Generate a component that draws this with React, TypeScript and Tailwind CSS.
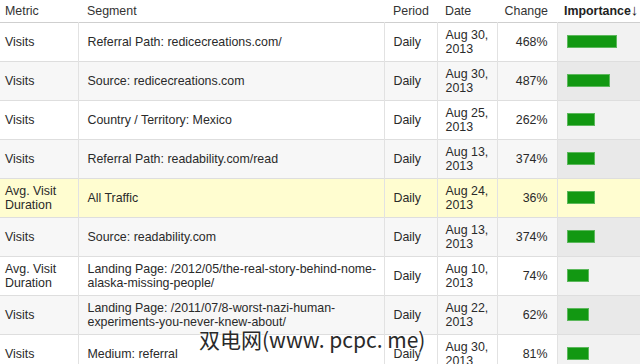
const rows = [
  { metric: ['Visits'], segment: ['Referral Path: redicecreations.com/'], date: 'Aug 30,', change: '468%', bar: 50 },
  { metric: ['Visits'], segment: ['Source: redicecreations.com'], date: 'Aug 30,', change: '487%', bar: 43 },
  { metric: ['Visits'], segment: ['Country / Territory: Mexico'], date: 'Aug 25,', change: '262%', bar: 28 },
  { metric: ['Visits'], segment: ['Referral Path: readability.com/read'], date: 'Aug 13,', change: '374%', bar: 28 },
  { metric: ['Avg. Visit', 'Duration'], segment: ['All Traffic'], date: 'Aug 24,', change: '36%', bar: 28, highlight: true },
  { metric: ['Visits'], segment: ['Source: readability.com'], date: 'Aug 13,', change: '374%', bar: 28 },
  {
    metric: ['Avg. Visit', 'Duration'],
    segment: ['Landing Page: /2012/05/the-real-story-behind-nome-', 'alaska-missing-people/'],
    date: 'Aug 10,', change: '74%', bar: 22,
  },
  {
    metric: ['Visits'],
    segment: ['Landing Page: /2011/07/8-worst-nazi-human-', 'experiments-you-never-knew-about/'],
    date: 'Aug 22,', change: '62%', bar: 22,
  },
  { metric: ['Visits'], segment: ['Medium: referral'], date: 'Aug 30,', change: '81%', bar: 22 },
]

function Lines({ lines }: { lines: string[] }) {
  return (
    <>
      {lines.map((l, i) => (
        <div key={i}>{l}</div>
      ))}
    </>
  )
}

export default function App() {
  return (
    <div className="relative w-[640px] h-[364px] overflow-hidden bg-white text-[12.4px] leading-[14px] text-[#2a2a2a]"
      style={{ fontFamily: '"Liberation Sans", Arial, sans-serif' }}>
      <table className="border-collapse table-fixed w-[640px]">
        <colgroup>
          <col className="w-[78px]" />
          <col className="w-[306px]" />
          <col className="w-[53px]" />
          <col className="w-[60px]" />
          <col className="w-[60px]" />
          <col className="w-[83px]" />
        </colgroup>
        <thead>
          <tr className="h-[22px] border-b border-[#cfcfcf] text-[#333]">
            <th className="pl-[5px] text-left font-normal">Metric</th>
            <th className="pl-[9px] text-left font-normal">Segment</th>
            <th className="pl-[9px] text-left font-normal">Period</th>
            <th className="pl-[8px] text-left font-normal">Date</th>
            <th className="pr-[9px] text-right font-normal">Change</th>
            <th className="pl-[7px] text-left font-bold whitespace-nowrap text-[#222]">
              Importance<span className="text-[15px] font-normal leading-[14px]">↓</span>
            </th>
          </tr>
        </thead>
        <tbody>
          {rows.map((r, i) => {
            const bg = r.highlight ? 'bg-[#fffdd0]' : i % 2 === 0 ? 'bg-white' : 'bg-[#f7f7f7]'
            const sortBg = r.highlight ? 'bg-[#fffdd0]' : i % 2 === 0 ? 'bg-[#f2f2f2]' : 'bg-[#e9e9e9]'
            return (
              <tr key={i} className={`h-[39px] border-b border-[#dedede] ${bg}`}>
                <td className="pl-[5px] align-middle"><Lines lines={r.metric} /></td>
                <td className="pl-[9px] border-l border-[#e2e2e2] align-middle"><Lines lines={r.segment} /></td>
                <td className="pl-[9px] border-l border-[#e2e2e2] align-middle">Daily</td>
                <td className="pl-[8px] border-l border-[#e2e2e2] align-middle">
                  <div>{r.date}</div>
                  <div>2013</div>
                </td>
                <td className="pr-[9px] border-l border-[#e2e2e2] text-right align-middle">{r.change}</td>
                <td className={`pl-[9px] border-l border-[#e2e2e2] align-middle ${sortBg}`}>
                  <div className="h-[13px] bg-[#129812] border border-[#5cb85c]" style={{ width: r.bar }} />
                </td>
              </tr>
            )
          })}
        </tbody>
      </table>
      <div className="absolute left-[199px] top-[326px] text-[21px] leading-[26px] text-[#2a2a2a] whitespace-nowrap"
        style={{ fontFamily: '"Noto Sans CJK SC", sans-serif', textShadow: '0 0 2px #fff, 0 0 2px #fff, 0 0 3px #fff' }}>
        双电网(www. pcpc. me)
      </div>
    </div>
  )
}
